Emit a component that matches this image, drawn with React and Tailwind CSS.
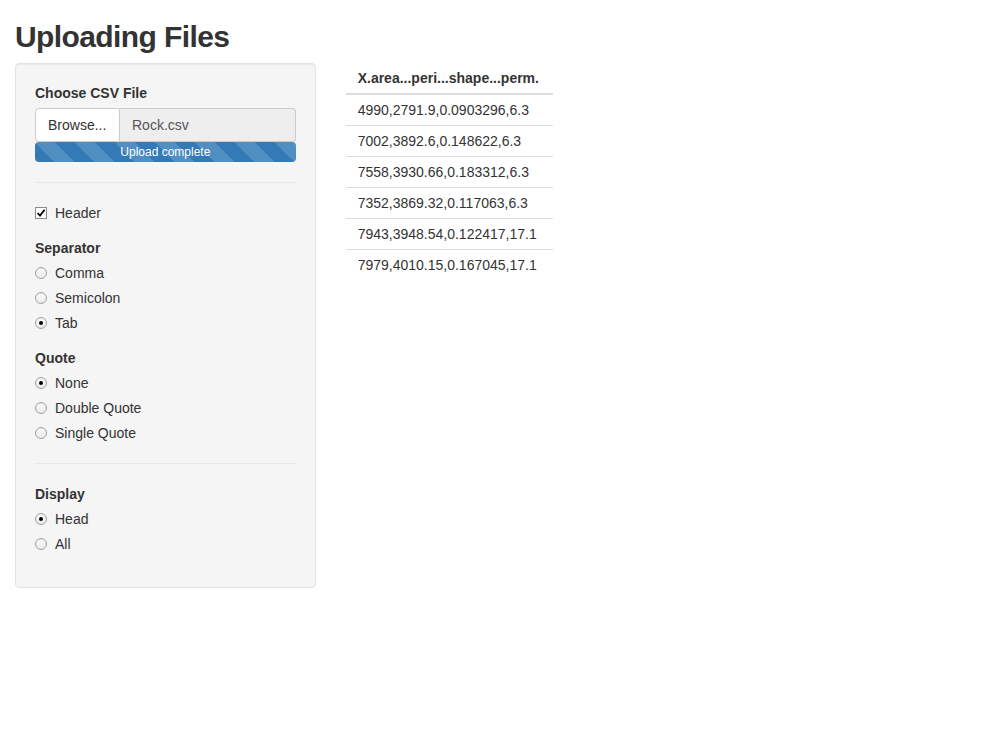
import React from "react";

const stripes =
  "bg-[#337ab7] bg-[linear-gradient(45deg,rgba(255,255,255,.15)_25%,transparent_25%,transparent_50%,rgba(255,255,255,.15)_50%,rgba(255,255,255,.15)_75%,transparent_75%,transparent)] bg-[length:40px_40px]";

const rows = [
  "4990,2791.9,0.0903296,6.3",
  "7002,3892.6,0.148622,6.3",
  "7558,3930.66,0.183312,6.3",
  "7352,3869.32,0.117063,6.3",
  "7943,3948.54,0.122417,17.1",
  "7979,4010.15,0.167045,17.1",
];

function Radio({ label, checked }) {
  return (
    <div className="flex items-center h-[20px]">
      <span className="w-[12px] h-[12px] rounded-full border border-[#a3a3a3] bg-gradient-to-b from-white to-[#e9e9e9] flex items-center justify-center shadow-[inset_0_1px_1px_rgba(0,0,0,0.08)]">
        {checked && <span className="w-[4px] h-[4px] rounded-full bg-black" />}
      </span>
      <span className="ml-[8px]">{label}</span>
    </div>
  );
}

function Group({ title, options, selected }) {
  return (
    <div>
      <div className="font-bold h-[20px] leading-[20px] mb-[5px]">{title}</div>
      <div className="flex flex-col gap-[5px]">
        {options.map((o) => (
          <Radio key={o} label={o} checked={o === selected} />
        ))}
      </div>
    </div>
  );
}

export default function App() {
  return (
    <div className="min-h-screen bg-white text-[#333] text-[14px] leading-[20px] font-['Liberation_Sans',Arial,sans-serif] px-[15px]">
      <h2 className="text-[30px] leading-[33px] font-bold tracking-[-0.6px] mt-[20px] mb-[10px]">
        Uploading Files
      </h2>

      <div className="flex -mx-[15px]">
        {/* sidebar */}
        <div className="w-1/3 px-[15px]">
          <div className="bg-[#f5f5f5] border border-[#e3e3e3] rounded-[4px] p-[19px] shadow-[inset_0_1px_1px_rgba(0,0,0,0.05)]">
            <div className="font-bold h-[20px] mb-[5px]">Choose CSV File</div>
            <div className="flex h-[34px]">
              <div className="w-[85px] shrink-0 bg-white border border-[#ccc] rounded-l-[4px] flex items-center px-[12px]">
                Browse...
              </div>
              <div className="flex-1 bg-[#eee] border border-l-0 border-[#ccc] rounded-r-[4px] flex items-center px-[12px] text-[#555]">
                Rock.csv
              </div>
            </div>
            <div className={`h-[20px] rounded-[4px] text-white text-[12px] leading-[20px] text-center ${stripes}`}>
              Upload complete
            </div>

            <hr className="border-0 border-t border-[#e9e9e9] my-[20px]" />

            <div className="flex items-center h-[20px]">
              <span className="w-[12px] h-[12px] border border-[#8c8c8c] bg-white flex items-center justify-center">
                <svg width="10" height="10" viewBox="0 0 10 10">
                  <path d="M1.6 5 L4 7.6 L8.6 1.8" fill="none" stroke="#000" strokeWidth="1.8" />
                </svg>
              </span>
              <span className="ml-[8px]">Header</span>
            </div>

            <div className="mt-[15px]">
              <Group title="Separator" options={["Comma", "Semicolon", "Tab"]} selected="Tab" />
            </div>
            <div className="mt-[15px]">
              <Group
                title="Quote"
                options={["None", "Double Quote", "Single Quote"]}
                selected="None"
              />
            </div>

            <hr className="border-0 border-t border-[#e9e9e9] my-[20px]" />

            <Group title="Display" options={["Head", "All"]} selected="Head" />
            <div className="h-[14px]" />
          </div>
        </div>

        {/* main */}
        <div className="w-2/3 px-[15px]">
          <table className="border-collapse w-[207px]">
            <thead>
              <tr>
                <th className="text-left font-bold px-[12px] py-[5px] border-b-2 border-[#ddd] whitespace-nowrap">
                  X.area...peri...shape...perm.
                </th>
              </tr>
            </thead>
            <tbody>
              {rows.map((r, i) => (
                <tr key={r}>
                  <td
                    className={`px-[12px] py-[5px] whitespace-nowrap ${
                      i > 0 ? "border-t border-[#ddd]" : ""
                    }`}
                  >
                    {r}
                  </td>
                </tr>
              ))}
            </tbody>
          </table>
        </div>
      </div>
    </div>
  );
}
